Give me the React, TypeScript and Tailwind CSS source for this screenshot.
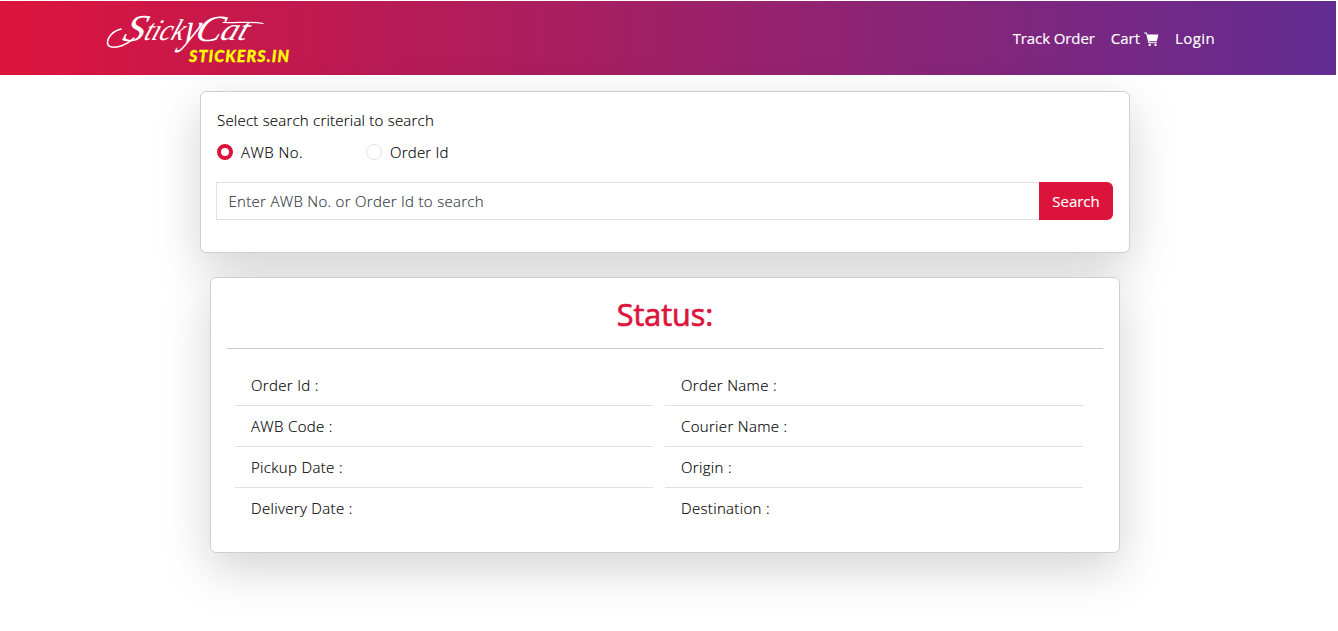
const left = ["Order Id :", "AWB Code :", "Pickup Date :", "Delivery Date :"];
const right = ["Order Name :", "Courier Name :", "Origin :", "Destination :"];

function Logo() {
  return (
    <svg className="h-[66px] w-[190px]" viewBox="0 -8 190 66" role="img" aria-label="StickyCat Stickers.in">
      <g fill="none" stroke="#fff" strokeLinecap="round">
        <path d="M16 21C4 24 -1 36 5 38.500C12 41 23 36 29 30" strokeWidth="1.6" />
        <path d="M118 14.500C134 15 148 13 158 15.500" strokeWidth="1.2" />
      </g>
      <g fill="#fff" fontStyle="italic" fontFamily="'Liberation Serif', serif" transform="translate(10 34) skewX(-20)">
        <text x="6" y="-1" fontSize="38" textLength="21" lengthAdjust="spacingAndGlyphs">S</text>
        <text x="27" y="-2" fontSize="30" textLength="39" lengthAdjust="spacingAndGlyphs">tick</text>
        <text x="66" y="1" fontSize="44" textLength="15" lengthAdjust="spacingAndGlyphs">y</text>
        <text x="78" y="-1" fontSize="37" textLength="26" lengthAdjust="spacingAndGlyphs">C</text>
        <text x="103" y="-2" fontSize="32" textLength="27" lengthAdjust="spacingAndGlyphs">at</text>
      </g>
      <text x="84" y="54" fill="#ff0" stroke="#ff0" strokeWidth="0.3" fontSize="16" fontWeight="900" fontStyle="italic" textLength="100" fontFamily="Lato, sans-serif">STICKERS.IN</text>
    </svg>
  );
}

function CartIcon() {
  return (
    <svg className="mt-0.5 size-[15px]" viewBox="0 0 15 15" fill="#fff">
      <path d="M0 .5H2.400C2.800.500 3 .800 3.100 1.100L3.400 2.500H14.400L13 8.700C12.900 9 12.600 9.200 12.300 9.200H5.200L5.400 10.300H13V11.300H4.500L2.100 1.600H.3Z" />
      <circle cx="5.700" cy="12.900" r="1.200" />
      <circle cx="11.500" cy="12.900" r="1.200" />
    </svg>
  );
}

function List({ rows }: { rows: string[] }) {
  return (
    <ul className="w-[418px]">
      {rows.map((r) => (
        <li key={r} className="h-[41px] border-b border-[#dfe1e3] px-4 pt-2 leading-6 last:border-b-0">{r}</li>
      ))}
    </ul>
  );
}

export default function App() {
  return (
    <div className="h-[631px] overflow-hidden bg-white pt-px font-['Open_Sans',sans-serif] text-[15px] font-light tracking-[0.33px] text-black [-webkit-text-stroke:0.15px]">
      <header className="mr-0.5 flex h-[74px] items-start justify-between bg-linear-to-r/srgb from-[#dc143c] to-[#622c92] pl-[105px] pr-[121px]">
        <div className="-mt-px tracking-normal"><Logo /></div>
        <nav className="flex gap-4 pt-[25px] font-normal leading-6 text-white">
          <a className="tracking-[-0.1px]">Track Order</a>
          <a className="flex items-center gap-1 tracking-normal">Cart <CartIcon /></a>
          <a className="tracking-[0.4px]">Login</a>
        </nav>
      </header>
      <main className="flex w-[1330px] flex-col items-center pt-4">
        <section className="h-[162px] w-[930px] rounded-md border border-[#cdcfd0] bg-white px-[15px] pt-4 shadow-[0_16px_48px_rgba(0,0,0,0.175)]">
          <p className="pl-px leading-6 tracking-[0.22px]">Select search criterial to search</p>
          <div className="flex pt-2 leading-6">
            <label className="flex w-[149px] items-center gap-2 tracking-[0.45px]"><span className="ml-px size-4 rounded-full border-[4.500px] border-[#dc143c]" />AWB No.</label>
            <label className="flex items-center gap-2 tracking-[0.22px]"><span className="ml-px size-4 rounded-full border border-[#dee2e6]" />Order Id</label>
          </div>
          <div className="mt-[18px] flex h-[38px] w-[897px]">
            <input className="min-w-0 flex-1 border border-r-0 border-[#dee2e6] px-[11.500px] tracking-[0.3px] outline-none placeholder:text-[#33383c]" placeholder="Enter AWB No. or Order Id to search" />
            <button className="w-[74px] rounded-r-md bg-[#dc143c] font-normal tracking-normal text-white">Search</button>
          </div>
        </section>
        <section className="mt-6 h-[276px] w-[910px] rounded-md border border-[#cdcfd0] bg-white px-4 pt-4 shadow-[0_16px_48px_rgba(0,0,0,0.175)]">
          <h2 className="h-[55px] border-b border-[#c8c9ca] text-center text-[30.500px] font-normal leading-[41px] tracking-normal text-[#dc143c] [-webkit-text-stroke:0.7px_#dc143c]">Status:</h2>
          <div className="flex gap-3 px-2 pt-4">
            <List rows={left} />
            <List rows={right} />
          </div>
        </section>
      </main>
    </div>
  );
}
